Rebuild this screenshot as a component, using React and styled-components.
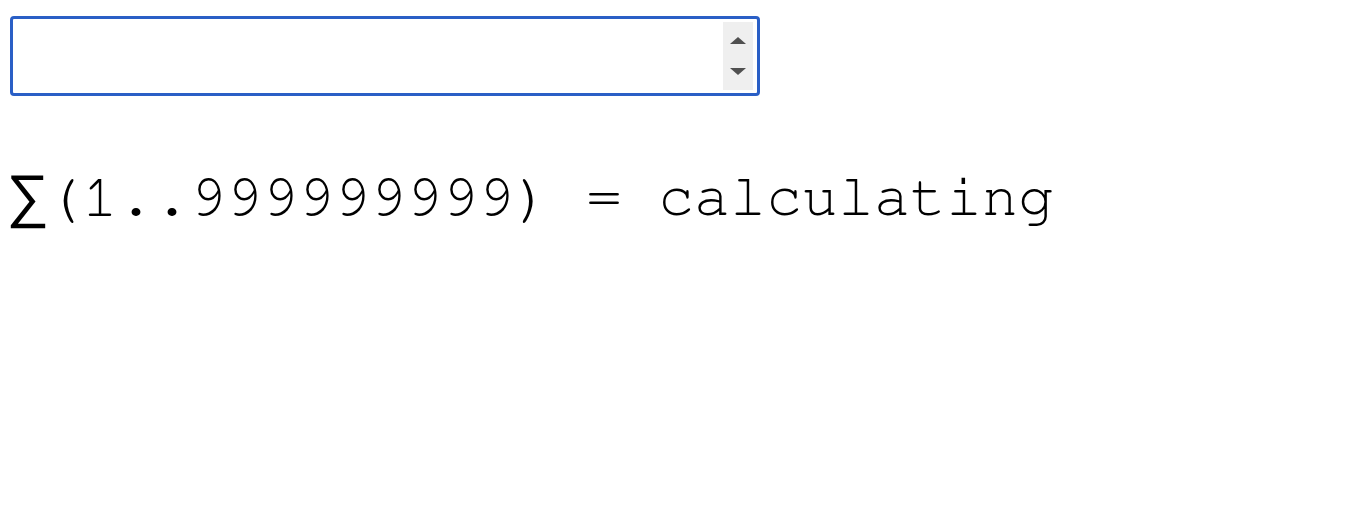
import React from 'react'
import styled, { createGlobalStyle } from 'styled-components'

const Global = createGlobalStyle`
  body {
    margin: 0;
    background: #fff;
    font-family: "Liberation Sans", Arial, sans-serif;
  }
`

const Page = styled.div`
  padding: 16px 10px;
  display: flex;
  flex-direction: column;
  align-items: flex-start;
  gap: 71px;
`

const Field = styled.div`
  box-sizing: border-box;
  width: 750px;
  height: 80px;
  border: 3px solid #2a5fc6;
  border-radius: 4px;
  display: flex;
  align-items: stretch;
  padding: 3px 4px 3px 3px;
`

const Input = styled.input`
  flex: 1;
  border: none;
  outline: none;
  background: transparent;
  font-size: 40px;
  font-family: "Liberation Sans", Arial, sans-serif;
`

const Spinner = styled.div`
  width: 30px;
  background: #efefef;
  display: flex;
  flex-direction: column;
  align-items: center;
  justify-content: space-between;
  padding: 15px 0;
`

const Arrow = styled.span`
  width: 0;
  height: 0;
  border-left: 8px solid transparent;
  border-right: 8px solid transparent;
  ${p => (p.$up ? 'border-bottom: 7px solid #505050;' : 'border-top: 7px solid #505050;')}
`

const Result = styled.div`
  font-family: "Nimbus Mono PS", "Nimbus Mono L", "FreeMono", "Liberation Mono", monospace;
  font-size: 60px;
  color: #000;
  white-space: pre;
  line-height: 1;
`

const Sigma = styled.span`
  font-family: "Liberation Mono", monospace;
`

const App = () => {
  return (
    <>
      <Global />
      <Page>
        <Field>
          <Input type="text" />
          <Spinner>
            <Arrow $up />
            <Arrow />
          </Spinner>
        </Field>
        <Result>
          <Sigma>∑</Sigma>(1..999999999) = calculating
        </Result>
      </Page>
    </>
  )
}

export default App
